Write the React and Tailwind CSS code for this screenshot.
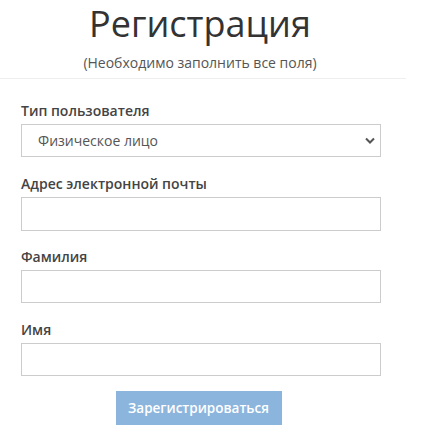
export default function App() {
  const font = { fontFamily: '"Open Sans", "Noto Sans", sans-serif' };
  return (
    <div className="w-[433px] h-[438px] bg-white overflow-hidden" style={font}>
      <div className="w-[406px]">
        <div className="w-[400px] flex flex-col items-center">
          <h1 className="mt-[2px] text-[36px] leading-[44px] text-[#333] font-normal">Регистрация</h1>
          <p className="mt-[7px] text-[14px] leading-[19px] text-[#555]">(Необходимо заполнить все поля)</p>
        </div>
        <div className="mt-[6px] h-px bg-[#eee]" />
        <form className="pl-[21px] w-[381px] flex flex-col">
          <label className="mt-[22px] text-[14px] leading-[20px] font-semibold text-[#444]">Тип пользователя</label>
          <div className="mt-[3px] h-[33px] border border-[#ccc] flex items-center justify-between pl-[16px] pr-[5px]">
            <span className="text-[14px] text-[#555]">Физическое лицо</span>
            <svg width="10" height="7" viewBox="0 0 10 7">
              <path d="M1 1.5 L5 5.5 L9 1.5" stroke="#555" strokeWidth="2" fill="none" />
            </svg>
          </div>
          <label className="mt-[17px] text-[14px] leading-[20px] font-semibold text-[#444]">Адрес электронной почты</label>
          <input className="mt-[3px] h-[34px] border border-[#ccc] outline-none" />
          <label className="mt-[16px] text-[14px] leading-[20px] font-semibold text-[#444]">Фамилия</label>
          <input className="mt-[3px] h-[33px] border border-[#ccc] outline-none" />
          <label className="mt-[17px] text-[14px] leading-[20px] font-semibold text-[#444]">Имя</label>
          <input className="mt-[3px] h-[33px] border border-[#ccc] outline-none" />
        </form>
        <div className="w-[400px] flex justify-center mt-[15px]">
          <button className="w-[166px] h-[34px] bg-[#8bb5dd] text-white text-[13.5px] font-semibold ml-[-3px]">Зарегистрироваться</button>
        </div>
      </div>
    </div>
  );
}
